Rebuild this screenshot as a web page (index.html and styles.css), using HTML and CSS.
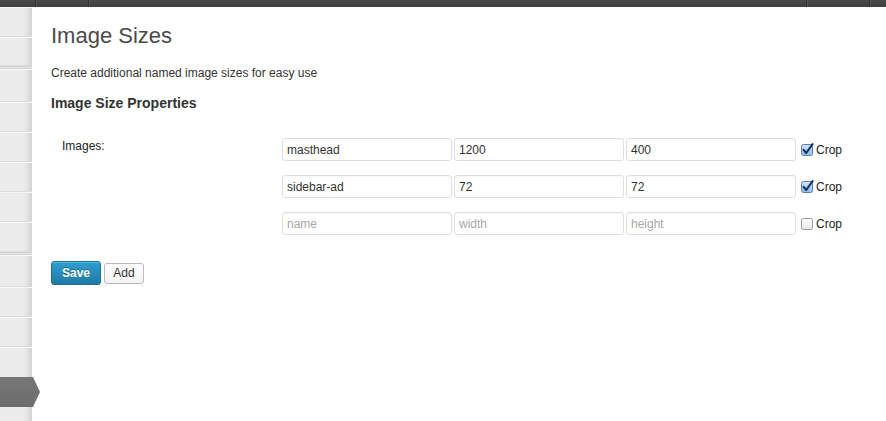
FILE: index.html
```html
<!DOCTYPE html>
<html>
<head>
<meta charset="utf-8">
<link rel="stylesheet" href="styles.css">
</head>
<body>
<div class="topbar">
  <div class="tb-item tb-a"></div>
  <div class="tb-item tb-b"></div>
  <div class="tb-fill"></div>
  <div class="tb-item tb-c"></div>
  <div class="tb-item tb-d"></div>
</div>
<div class="layout">
  <nav class="sidebar">
    <div class="menu-item h30"></div>
    <div class="menu-item h29"></div>
    <div class="menu-sep"></div>
    <div class="menu-item h33"></div>
    <div class="menu-item h30"></div>
    <div class="menu-item h30"></div>
    <div class="menu-item h30"></div>
    <div class="menu-item h30"></div>
    <div class="menu-item h30"></div>
    <div class="menu-sep"></div>
    <div class="menu-item h32"></div>
    <div class="menu-item h30"></div>
    <div class="menu-item h30"></div>
    <div class="menu-item h30 last"></div>
    <div class="menu-item active"></div>
  </nav>
  <main class="content">
    <h2 class="page-title">Image Sizes</h2>
    <p class="desc">Create additional named image sizes for easy use</p>
    <h3 class="section-title">Image Size Properties</h3>
    <div class="form-table">
      <div class="field-label">Images:</div>
      <div class="field-rows">
        <div class="size-row">
          <input class="text-input" type="text" value="masthead" placeholder="name">
          <input class="text-input" type="text" value="1200" placeholder="width">
          <input class="text-input" type="text" value="400" placeholder="height">
          <label class="crop">
            <svg class="cb" width="13" height="13" viewBox="0 0 13 13"><defs><linearGradient id="gb" x1="0" y1="0" x2="0" y2="1"><stop offset="0" stop-color="#d3e6fa"/><stop offset="1" stop-color="#8fbbe8"/></linearGradient></defs><rect x="0.5" y="1.5" width="11" height="11" rx="2" fill="url(#gb)" stroke="#5a7fae"/><path d="M2.6 6.8 L5.2 10 L11.6 1.2" fill="none" stroke="#14305f" stroke-width="2.1" stroke-linecap="round" stroke-linejoin="round"/></svg>
            <span>Crop</span>
          </label>
        </div>
        <div class="size-row">
          <input class="text-input" type="text" value="sidebar-ad" placeholder="name">
          <input class="text-input" type="text" value="72" placeholder="width">
          <input class="text-input" type="text" value="72" placeholder="height">
          <label class="crop">
            <svg class="cb" width="13" height="13" viewBox="0 0 13 13"><rect x="0.5" y="1.5" width="11" height="11" rx="2" fill="url(#gb)" stroke="#5a7fae"/><path d="M2.6 6.8 L5.2 10 L11.6 1.2" fill="none" stroke="#14305f" stroke-width="2.1" stroke-linecap="round" stroke-linejoin="round"/></svg>
            <span>Crop</span>
          </label>
        </div>
        <div class="size-row">
          <input class="text-input" type="text" value="" placeholder="name">
          <input class="text-input" type="text" value="" placeholder="width">
          <input class="text-input" type="text" value="" placeholder="height">
          <label class="crop">
            <svg class="cb" width="13" height="13" viewBox="0 0 13 13"><defs><linearGradient id="gw" x1="0" y1="0" x2="0" y2="1"><stop offset="0" stop-color="#ffffff"/><stop offset="1" stop-color="#e6e6e6"/></linearGradient></defs><rect x="0.5" y="1.5" width="11" height="11" rx="2" fill="url(#gw)" stroke="#9a9a9a"/></svg>
            <span>Crop</span>
          </label>
        </div>
      </div>
    </div>
    <div class="actions">
      <button class="btn btn-primary">Save</button>
      <button class="btn btn-secondary">Add</button>
    </div>
  </main>
</div>
</body>
</html>
```
FILE: styles.css
```css
html, body {
  margin: 0;
  padding: 0;
  background: #ffffff;
  font-family: "Liberation Sans", Arial, sans-serif;
  height: 100%;
  overflow: hidden;
}

.topbar {
  height: 7px;
  display: flex;
  background: linear-gradient(#4a4a4a, #3e3e3e);
}
.tb-item {
  height: 7px;
  border-right: 1px solid #2e2e2e;
  box-shadow: 1px 0 0 #585858;
}
.tb-a { width: 35px; }
.tb-b { width: 52px; }
.tb-fill { flex: 1; border-right: 1px solid #2e2e2e; box-shadow: 1px 0 0 #585858; }
.tb-c { width: 62px; }
.tb-d { width: 16px; border-right: none; box-shadow: none; }

.layout {
  display: flex;
  height: 414px;
}

.sidebar {
  width: 32px;
  flex: none;
  background: #ececec;
  box-shadow: inset -7px 0 6px -4px rgba(0,0,0,0.13);
  display: flex;
  flex-direction: column;
  position: relative;
}
.menu-item {
  box-sizing: border-box;
  flex: none;
  border-bottom: 1px solid #dcdcdc;
  border-top: 1px solid #f7f7f7;
}
.h29 { height: 29px; }
.h30 { height: 30px; }
.h32 { height: 32px; }
.h33 { height: 33px; }
.menu-item.last { border-bottom: none; }
.menu-sep {
  flex: none;
  box-sizing: border-box;
  height: 3px;
  border-top: 1px solid #d0d0d0;
  border-bottom: 1px solid #d6d6d6;
  background: #e4e4e4;
}
.menu-item.active {
  height: 30px;
  width: 33px;
  border: none;
  background: linear-gradient(#777777, #6c6c6c);
  position: relative;
}
.menu-item.active::after {
  content: "";
  position: absolute;
  left: 33px;
  top: 0;
  width: 0;
  height: 0;
  border-top: 15px solid transparent;
  border-bottom: 15px solid transparent;
  border-left: 7px solid #727272;
}

.content {
  flex: 1;
  padding: 16px 0 0 19px;
}

.page-title {
  margin: 0;
  font-size: 22px;
  line-height: 26px;
  font-weight: normal;
  color: #4a4a4a;
}
.desc {
  margin: 16px 0 0 0;
  font-size: 12px;
  line-height: 16px;
  color: #333333;
}
.section-title {
  margin: 13px 0 0 0;
  font-size: 14px;
  line-height: 18px;
  font-weight: bold;
  color: #333333;
}

.form-table {
  display: grid;
  grid-template-columns: 231px auto;
  margin-top: 24px;
}
.field-label {
  padding: 2px 0 0 11px;
  font-size: 12px;
  line-height: 16px;
  color: #222222;
}
.field-rows {
  display: flex;
  flex-direction: column;
  gap: 14px;
  padding-top: 2px;
}
.size-row {
  display: flex;
  align-items: center;
  gap: 2px;
}
.text-input {
  box-sizing: border-box;
  width: 170px;
  height: 23px;
  margin: 0;
  padding: 0 4px;
  border: 1px solid #dfdfdf;
  border-radius: 3px;
  background: #ffffff;
  font-family: "Liberation Sans", Arial, sans-serif;
  font-size: 12px;
  color: #333333;
  outline: none;
  box-shadow: inset 0 1px 1px rgba(0,0,0,0.03);
}
.text-input::placeholder {
  color: #a8a8a8;
}
.crop {
  display: flex;
  align-items: center;
  margin-left: 3px;
  font-size: 12px;
  color: #222222;
}
.cb {
  display: block;
  margin-right: 2px;
  overflow: visible;
}

.actions {
  display: flex;
  align-items: center;
  gap: 3px;
  margin-top: 26px;
}
.btn {
  box-sizing: border-box;
  margin: 0;
  font-family: "Liberation Sans", Arial, sans-serif;
  font-size: 12px;
  border-radius: 3px;
  cursor: pointer;
}
.btn-primary {
  width: 50px;
  height: 24px;
  padding: 0;
  font-weight: bold;
  color: #ffffff;
  border: 1px solid #1f6f96;
  background: linear-gradient(#2e9fd2, #217aa5);
  box-shadow: inset 0 1px 0 rgba(130,210,240,0.5);
  text-shadow: 0 -1px 0 rgba(0,0,0,0.25);
}
.btn-secondary {
  width: 40px;
  height: 21px;
  padding: 0;
  color: #333333;
  border: 1px solid #bbbbbb;
  background: linear-gradient(#ffffff, #f3f3f3);
}
```
